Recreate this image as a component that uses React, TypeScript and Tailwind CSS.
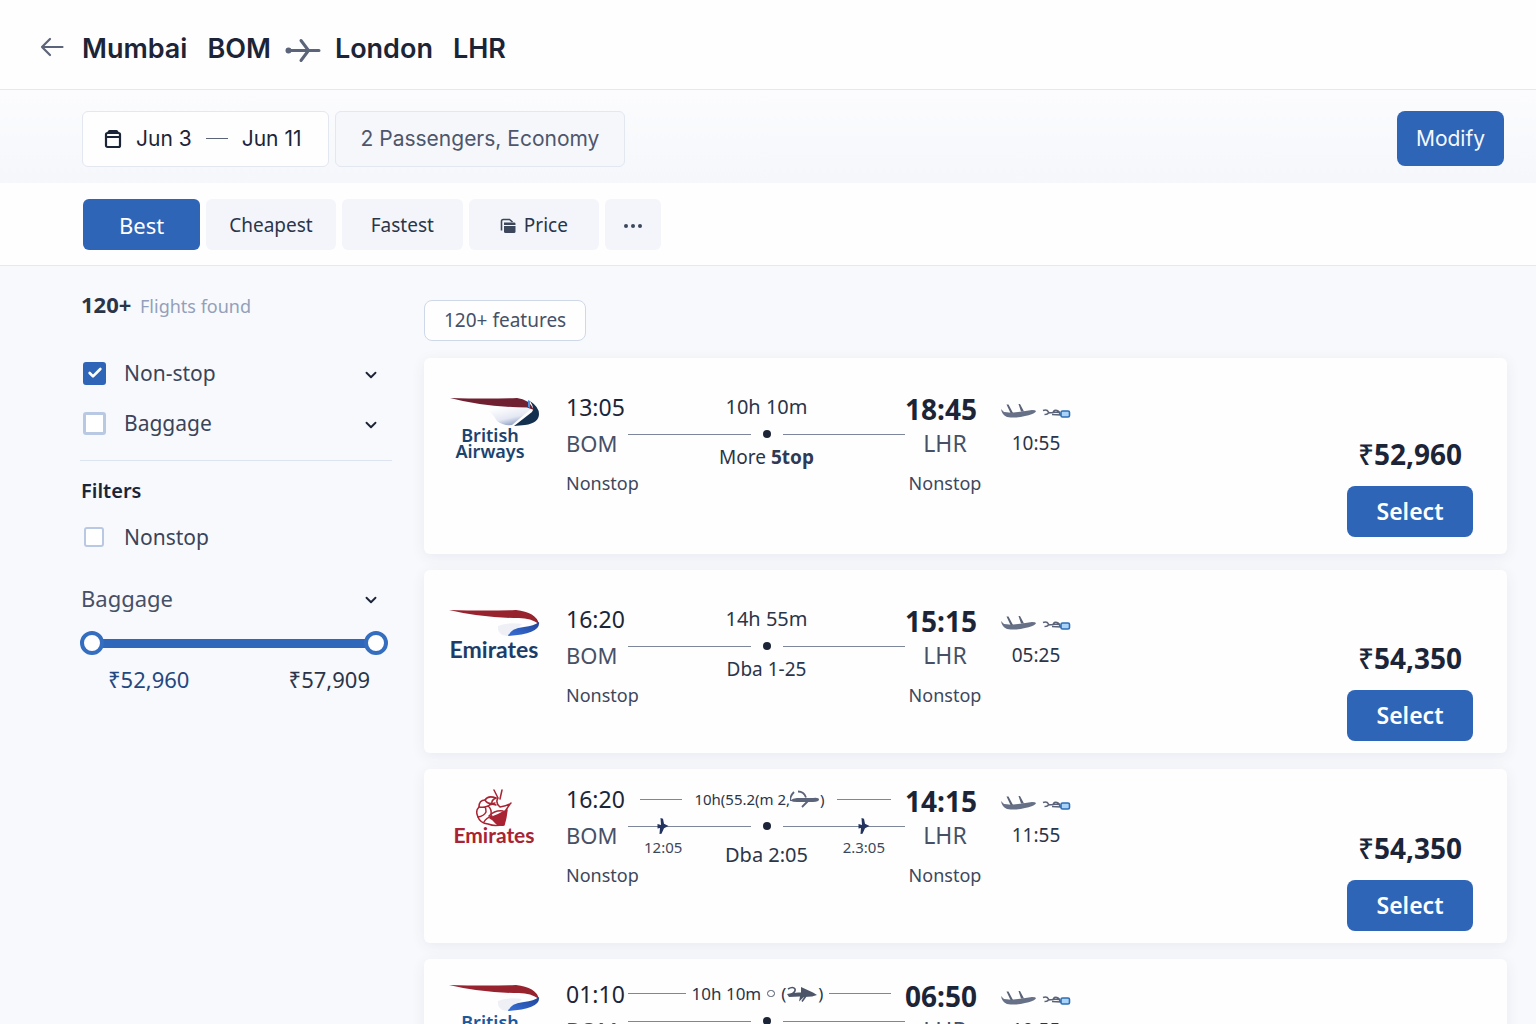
import { useState } from 'react'
import type { ReactNode } from 'react'
import { Check, ChevronDown } from 'lucide-react'

type Leg = {
  id: number
  logo: ReactNode
  pad: string
  pricePad: string
  depart: string
  arrive: string
  side: string
  price: string
  duration: ReactNode
  via: ReactNode
  stops?: [string, string]
}

function BackArrow() {
  return (
    <svg viewBox="0 0 24 20" className="h-5 w-6" fill="none" stroke="#5b6479" strokeWidth="2.2" strokeLinecap="round" strokeLinejoin="round" aria-hidden="true">
      <path d="M22.500 10H2M10 2L2 10l8 8" />
    </svg>
  )
}

function RoutePlane() {
  return (
    <svg viewBox="0 0 36 26" className="h-[26px] w-9" fill="none" stroke="#5b6479" strokeWidth="3" strokeLinecap="round" strokeLinejoin="round" aria-hidden="true">
      <path d="M3 13.500H34M16 3.500L23.500 13.500L16 23.500" />
      <circle cx="3.500" cy="13.500" r="1.500" fill="#5b6479" />
    </svg>
  )
}

function CalendarIcon() {
  return (
    <svg viewBox="0 0 18 20" className="h-5 w-[18px]" fill="none" stroke="#1c2538" strokeWidth="2.2" strokeLinejoin="round" aria-hidden="true">
      <rect x="2" y="4" width="14" height="14" rx="1.500" />
      <path d="M2 8h14M4 4l1.500-2h7L14 4" />
    </svg>
  )
}

function PriceIcon() {
  return (
    <svg viewBox="0 0 16 16" className="h-4 w-4" aria-hidden="true">
      <path d="M1.500 12.500V3.200Q1.500 1.500 3.200 1.500H9.500L12.500 4" fill="none" stroke="#3d475c" strokeWidth="1.600" />
      <path d="M4 4.500h10.200q1.300 0 1.300 1.300V7H4z" fill="#3d475c" />
      <path d="M4 8h11.500v5.500q0 1.500-1.500 1.500H5.500Q4 15 4 13.500z" fill="#3d475c" />
    </svg>
  )
}

function SmallPlane() {
  return (
    <svg viewBox="0 0 12 18" className="h-[18px] w-3" fill="#22335f" aria-hidden="true">
      <path d="M3.500 1l2.500.8 1 5 4.500 2.200-4.500 2.200-2.500 5.500-2 .3.500-6L.5 11.500V7L4 8z" />
    </svg>
  )
}

function InlinePlane({ filled = false }: { filled?: boolean }) {
  return filled ? (
    <svg viewBox="0 0 32 18" className="h-[18px] w-8" aria-hidden="true">
      <path d="M1 9q8-2 14-1.500L15 2l12 5.500 4 2.500-5 1.500-8 .5-5 4.500 1-5L3 12z" fill="#4d5669" />
      <path d="M2 4q5-3 7 0 1 3-5 6M20 11l-4 5.500" fill="none" stroke="#4d5669" strokeWidth="1.600" />
    </svg>
  ) : (
    <svg viewBox="0 0 30 18" className="h-[18px] w-[30px]" aria-hidden="true">
      <path d="M0 10.500q3-2.500 7-2.500h16q6-.8 6 1.500t-6 2.500H7q-4 0-7-1.500z" fill="#5b6479" />
      <path d="M4 2Q0 6 0 11M8 1.500q6 0 8 6M18 11l-6 6" fill="none" stroke="#5b6479" strokeWidth="1.800" />
    </svg>
  )
}

function LandingIcons() {
  return (
    <svg viewBox="0 0 70 18" className="h-[18px] w-[70px]" aria-hidden="true">
      <path d="M0 6q1 6 6 8 10 1.500 18-1 8-1.500 10.500-4 1.500-2-3.500-2l-10 1.500-11 1.200Q5 9 3 9L0 6z" fill="#667087" />
      <path d="M5.500 1.500l2 0L12 10H9.500zM17.500 1l1.500 0L23 8.500h-3z" fill="#5a6377" />
      <path d="M42 7.500q4-1.500 5.500 1.500 0 2.500-4 2.500M47 10l5-.5q1-3 4-2 3 1 3 4M51 11.500l9 .5M52 9l6 .5" fill="none" stroke="#5a6377" strokeWidth="1.500" />
      <rect x="60" y="8" width="8.500" height="6" rx="1.500" fill="#a9d3f7" stroke="#2d6fb8" strokeWidth="1.600" />
    </svg>
  )
}

function Ribbon({ dark = false }: { dark?: boolean }) {
  return (
    <svg viewBox="0 0 92 30" className="h-[30px] w-[92px]" aria-hidden="true">
      <defs>
        <linearGradient id="silver" x1="0" y1="0" x2="0.6" y2="1">
          <stop offset="0.2" stopColor="#ffffff" />
          <stop offset="0.7" stopColor="#e4e8f3" />
          <stop offset="1" stopColor="#93a3c6" />
        </linearGradient>
        <linearGradient id="wing" x1="0" y1="1" x2="1" y2="0">
          <stop offset="0.2" stopColor="#3468cc" />
          <stop offset="1" stopColor="#1f4396" />
        </linearGradient>
      </defs>
      {dark ? (
        <>
          <path d="M34 9L84 11 64 28q-9 1-15-4Q44 15 34 9z" fill="url(#silver)" />
          <path d="M82 4q9 6 9 13 0 9-14 11l-11 1 18-14q3-3-2-11z" fill="#14304f" />
          <path d="M2 1Q40 2 69 1q12 1 17 12l-7-2.500Q36 10 2 1z" fill="#702131" />
          <path d="M80 3l2 1v7l-2-1z" fill="#4b8fe0" />
        </>
      ) : (
        <>
          <path d="M50 17q10-4 24-2l-12 12q-13 0-12-10z" fill="#eef0f6" />
          <path d="M1 1Q40 2 68 1q20 2 23 14-8-6-20-6Q34 9 1 1z" fill="#97232f" />
          <path d="M91 13q2 12-31 14 3-8 16-9 10-1 15-5z" fill="url(#wing)" />
        </>
      )}
    </svg>
  )
}

function Crest() {
  return (
    <svg viewBox="0 0 36 38" className="h-[38px] w-9" fill="none" stroke="#a92332" strokeWidth="1.500" strokeLinecap="round" strokeLinejoin="round" aria-hidden="true">
      <path d="M20 9Q12 6 9 11 3 11 3 18-1 22 2 28q2 6 10 7 8 3 15 0" />
      <path d="M9 11q3 5 10 3M3 18q5 1 9-1 3-3 8-1M2 28q6-1 8-5 0-4-1-5M8 33q2-4 8-6M12 17q4 3 3 9M20 9q-5 2-4 6" />
      <path d="M18 1l4 8M26 1l-2 9M22 9q-3 5 2 9 6-1 10-3l-4 6M34 15l1-1" />
      <path d="M14 29q9-3 17-8-1 9-3 15-6 1-9-3-2-3-5-4z" fill="#a92332" />
      <path d="M13 27q6-6 14-5" />
    </svg>
  )
}

function BritishLogo({ dark = false }: { dark?: boolean }) {
  return (
    <div className="flex flex-col items-center">
      <Ribbon dark={dark} />
      <p className={`-ml-2 text-center text-lg leading-4 font-semibold ${dark ? 'text-[#1b436f]' : 'text-[#20569a]'}`}>
        British
        <br />
        Airways
      </p>
    </div>
  )
}

const LEGS: Leg[] = [
  {
    id: 1,
    logo: <BritishLogo dark />,
    pad: 'pt-[31px] pb-[53px]',
    pricePad: 'pb-[17px]',
    depart: '13:05',
    arrive: '18:45',
    side: '10:55',
    price: '52,960',
    duration: '10h 10m',
    via: (
      <>
        More <b className="text-[#2f3a55]">5top</b>
      </>
    ),
  },
  {
    id: 2,
    logo: (
      <div className="flex flex-col items-center">
        <Ribbon />
        <p className="mt-0.5 font-['Lato',sans-serif] text-[23px] leading-4 font-bold text-[#1d3d68]">Emirates</p>
      </div>
    ),
    pad: 'pt-[31px] pb-10',
    pricePad: 'pb-3',
    depart: '16:20',
    arrive: '15:15',
    side: '05:25',
    price: '54,350',
    duration: '14h 55m',
    via: 'Dba 1-25',
  },
  {
    id: 3,
    logo: (
      <div className="flex flex-col items-center">
        <Crest />
        <p className="font-['Lato',sans-serif] text-[21px] leading-4 font-bold text-[#a92332]">Emirates</p>
      </div>
    ),
    pad: 'pt-3 pb-[50px]',
    pricePad: 'pb-3',
    depart: '16:20',
    arrive: '14:15',
    side: '11:55',
    price: '54,350',
    duration: (
      <>
        <span className="ml-3 h-px w-[42px] bg-[#7d869a]" />
        <span className="flex items-center text-[15px]">
          10h(55.2(m 2,
          <InlinePlane />)
        </span>
        <span className="mr-3.5 h-px w-[54px] bg-[#7d869a]" />
      </>
    ),
    via: 'Dba 2:05',
    stops: ['12:05', '2.3:05'],
  },
  {
    id: 4,
    logo: <BritishLogo />,
    pad: 'pt-[17px] pb-[50px]',
    pricePad: 'pb-3',
    depart: '01:10',
    arrive: '06:50',
    side: '10:55',
    price: '52,940',
    duration: (
      <>
        <span className="h-px w-[58px] bg-[#7d869a]" />
        <span className="flex items-center text-[17px]">
          10h 10m
          <span className="mx-1.5 h-[7px] w-2 rounded-full border border-[#4d5669]" />(
          <InlinePlane filled />)
        </span>
        <span className="mr-3.5 h-px w-[62px] bg-[#7d869a]" />
      </>
    ),
    via: 'Dba 2:05',
  },
]

function TrackHalf({ time, side }: { time?: string; side: string }) {
  return (
    <span className="relative flex h-[18px] flex-1 items-center">
      <span className="h-px w-full bg-[#7d869a]" />
      {time && (
        <span className={`absolute top-0 flex flex-col items-center text-[15px] text-[#3d475c] ${side}`}>
          <SmallPlane />
          <span className="leading-6">{time}</span>
        </span>
      )}
    </span>
  )
}

function FlightCard({ leg }: { leg: Leg }) {
  return (
    <article className="flex rounded-md bg-[#fefefe] pr-[34px] pl-6 shadow-[0_3px_14px_rgba(50,65,130,0.08)]">
      <div className={`flex flex-1 ${leg.pad}`}>
        <div className="w-[92px] shrink-0 pt-2">{leg.logo}</div>
        <div className="ml-[26px] w-[62px] shrink-0 whitespace-nowrap">
          <p className="text-[23px] leading-9 text-[#1c2538]">{leg.depart}</p>
          <p className="text-[22px] leading-9 text-[#465067]">BOM</p>
          <p className="mt-1 text-lg leading-9 text-[#3d475c]">Nonstop</p>
        </div>
        <div className="w-[277px] shrink-0 text-center whitespace-nowrap text-[#2b3549]">
          <div className="flex h-9 items-center justify-center text-xl">
            {typeof leg.duration === 'string' ? leg.duration : <div className="flex w-full items-center justify-between">{leg.duration}</div>}
          </div>
          <div className="flex h-[18px] items-center gap-3">
            <TrackHalf time={leg.stops?.[0]} side="left-4" />
            <span className="h-2 w-2 rounded-full bg-[#1c2538]" />
            <TrackHalf time={leg.stops?.[1]} side="right-5" />
          </div>
          <p className={leg.stops ? 'mt-1.5 text-xl leading-7' : 'text-[19px] leading-7'}>{leg.via}</p>
        </div>
        <div className="w-20 shrink-0 text-center whitespace-nowrap">
          <p className="pt-1 pr-3 text-[28px] leading-8 font-bold text-[#1c2538]">{leg.arrive}</p>
          <p className="text-[23px] leading-9 text-[#465067]">LHR</p>
          <p className="mt-1 text-lg leading-9 text-[#3d475c]">Nonstop</p>
        </div>
        <div className="ml-4 w-[70px] shrink-0 text-center">
          <div className="flex h-9 items-end pb-1">
            <LandingIcons />
          </div>
          <p className="text-[19px] leading-9 text-[#2b3549]">{leg.side}</p>
        </div>
      </div>
      <div className={`flex flex-col items-center justify-end ${leg.pricePad}`}>
        <p className="mb-3 text-[28px] leading-10 font-bold text-[#1c2538]">
          <span className="font-medium">₹</span>
          {leg.price}
        </p>
        <button type="button" className="h-[51px] w-[126px] rounded-lg bg-[#2e65b7] text-[23px] font-semibold text-white">
          Select
        </button>
      </div>
    </article>
  )
}

function CheckRow({ label, checked, onChange, thin = false }: { label: string; checked: boolean; onChange: () => void; thin?: boolean }) {
  return (
    <label className={`flex items-center text-[21px] leading-7 text-[#3a445a] ${thin ? 'gap-5' : 'gap-[18px]'}`}>
      <span className="grid place-items-center">
        <input
          type="checkbox"
          checked={checked}
          onChange={onChange}
          className={`col-start-1 row-start-1 appearance-none rounded-[3px] border-[#b9c9e3] bg-white checked:border-[#2e65b7] checked:bg-[#2e65b7] ${
            thin ? 'h-5 w-5 border-2' : 'h-[23px] w-[23px] border-3'
          }`}
        />
        {checked && <Check className="pointer-events-none z-10 col-start-1 row-start-1 h-4 w-4 text-white" strokeWidth={4} />}
      </span>
      {label}
    </label>
  )
}

const SORTS = [
  { name: 'Best', pad: 'px-9' },
  { name: 'Cheapest', pad: 'px-[23px]' },
  { name: 'Fastest', pad: 'px-[29px]' },
  { name: 'Price', pad: 'px-[31px]' },
]

const THUMB =
  'pointer-events-none col-start-1 row-start-1 h-6 w-full appearance-none bg-transparent [&::-webkit-slider-thumb]:pointer-events-auto [&::-webkit-slider-thumb]:h-6 [&::-webkit-slider-thumb]:w-6 [&::-webkit-slider-thumb]:appearance-none [&::-webkit-slider-thumb]:rounded-full [&::-webkit-slider-thumb]:border-4 [&::-webkit-slider-thumb]:border-solid [&::-webkit-slider-thumb]:border-[#356dbf] [&::-webkit-slider-thumb]:bg-white'

export default function App() {
  const [sort, setSort] = useState('Best')
  const [filters, setFilters] = useState({ direct: true, bags: false, nonstop: false })
  const [range, setRange] = useState([52960, 57909])
  const toggle = (key: keyof typeof filters) => setFilters({ ...filters, [key]: !filters[key] })

  return (
    <div className="h-screen overflow-y-auto bg-[#f8f9fc] font-['Noto_Sans',sans-serif] text-[#1c2538] [scrollbar-width:none]">
      <header className="flex h-[90px] items-center border-b border-[#e6e8f0] bg-[#fefefe] pt-2.5 pl-10 font-['Inter',sans-serif]">
        <a href="#back" aria-label="Back" className="mr-[18px] pb-1.5">
          <BackArrow />
        </a>
        <h1 className="flex items-center text-[27px] font-semibold">
          <span>Mumbai</span>
          <span className="ml-5">BOM</span>
          <span className="mx-3.5">
            <RoutePlane />
          </span>
          <span>London</span>
          <span className="ml-5">LHR</span>
        </h1>
      </header>

      <section className="flex h-[93px] items-center bg-linear-to-b from-[#fcfcfe] to-[#f5f7fb] pt-1 pr-8 pl-[82px] font-['Inter',sans-serif] text-[21px]">
        <button type="button" className="flex h-14 items-center rounded-md border border-[#e3e7f0] bg-[#fefefe] pr-[26px] pl-[21px]">
          <CalendarIcon />
          <span className="ml-3.5">Jun 3</span>
          <span className="mx-3.5 h-px w-[22px] bg-[#5b6479]" />
          <span>Jun 11</span>
        </button>
        <button type="button" className="ml-1.5 h-14 rounded-md border border-[#e3e7f0] bg-[#f5f7fb] px-[25px] text-[#4d566b]">
          2 Passengers, Economy
        </button>
        <button type="button" className="ml-auto h-[55px] rounded-lg bg-[#2e65b7] px-[19px] text-[#f4f8ff]">
          Modify
        </button>
      </section>

      <nav className="flex h-[83px] items-center gap-1.5 border-b border-[#e6e8f0] bg-[#fefefe] pt-px pl-[83px]">
        {SORTS.map(({ name, pad }) => (
          <button
            key={name}
            type="button"
            onClick={() => setSort(name)}
            className={`flex h-[51px] items-center gap-2 rounded-md pt-0.5 ${pad} ${
              sort === name ? 'bg-[#2e65b7] text-[22px] text-white' : 'bg-[#f3f5fa] text-[19px] text-[#2b3549]'
            }`}
          >
            {name === 'Price' && <PriceIcon />}
            {name}
          </button>
        ))}
        <button type="button" aria-label="More" className="flex h-[51px] w-14 items-center justify-center gap-[3px] rounded-md bg-[#f3f5fa] pt-0.5">
          <span className="h-1 w-1 rounded-full bg-[#3d475c]" />
          <span className="h-1 w-1 rounded-full bg-[#3d475c]" />
          <span className="h-1 w-1 rounded-full bg-[#3d475c]" />
        </button>
      </nav>

      <div className="flex items-start pr-[29px] pl-20">
        <aside className="w-[312px] shrink-0 pt-[22px]">
          <p className="pl-px text-lg leading-8 text-[#93a0bb]">
            <b className="mr-1 text-[22px] text-[#2b3549]">120+</b> Flights found
          </p>

          <div className="mt-[37px] flex items-center justify-between pr-3 pl-[3px]">
            <CheckRow label="Non-stop" checked={filters.direct} onChange={() => toggle('direct')} />
            <ChevronDown className="mt-1 h-[18px] w-[18px]" strokeWidth={2.5} />
          </div>
          <div className="mt-[22px] flex items-center justify-between pr-3 pl-[3px]">
            <CheckRow label="Baggage" checked={filters.bags} onChange={() => toggle('bags')} />
            <ChevronDown className="mt-1 h-[18px] w-[18px]" strokeWidth={2.5} />
          </div>

          <hr className="mt-[23px] border-[#dde4ef]" />
          <h2 className="mt-4 pl-px text-xl leading-7 font-semibold">Filters</h2>
          <div className="mt-[18px] pl-1">
            <CheckRow label="Nonstop" checked={filters.nonstop} onChange={() => toggle('nonstop')} thin />
          </div>

          <div className="mt-[33px] flex items-center justify-between pr-3 pl-px text-[22px] leading-7 text-[#465067]">
            <h3>Baggage</h3>
            <ChevronDown className="mt-1 h-[18px] w-[18px] text-[#1c2538]" strokeWidth={2.5} />
          </div>
          <div className="mt-[19px] mr-1 grid items-center">
            <span className="col-start-1 row-start-1 mx-3 h-[9px] bg-[#2f67ba]" />
            <input type="range" aria-label="Lowest price" min={52960} max={57909} value={range[0]} onChange={(e) => setRange([+e.target.value, range[1]])} className={THUMB} />
            <input type="range" aria-label="Highest price" min={52960} max={57909} value={range[1]} onChange={(e) => setRange([range[0], +e.target.value])} className={THUMB} />
          </div>
          <div className="mt-2.5 flex justify-between pr-[22px] pl-7 text-[22px] leading-7">
            <span className="text-[#25477f]">₹{range[0].toLocaleString('en-US')}</span>
            <span className="text-[#2b3549]">₹{range[1].toLocaleString('en-US')}</span>
          </div>
        </aside>

        <main className="ml-8 flex flex-1 flex-col gap-4 pt-[34px]">
          <button type="button" className="mb-px h-[41px] self-start rounded-lg border border-[#cfd8e8] bg-[#fefefe] px-[19px] text-[19px] text-[#465067]">
            120+ features
          </button>
          {LEGS.map((leg) => (
            <FlightCard key={leg.id} leg={leg} />
          ))}
        </main>
      </div>
    </div>
  )
}
